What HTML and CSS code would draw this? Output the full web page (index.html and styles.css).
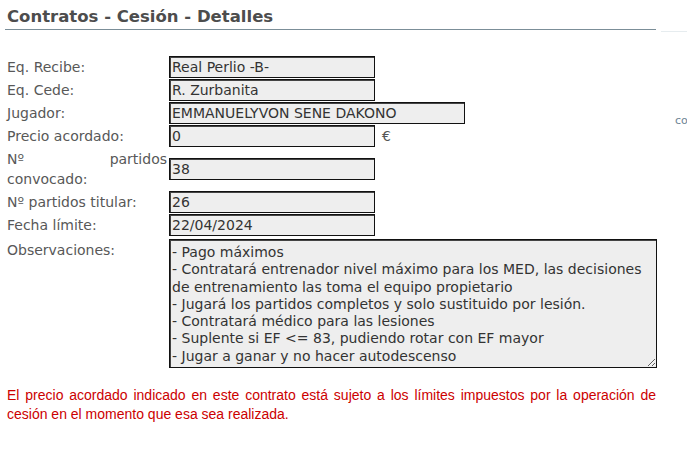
FILE: index.html
```html
<!DOCTYPE html>
<html lang="es">
<head>
  <meta charset="UTF-8">
  <title>Contratos - Cesión - Detalles</title>
  <link rel="stylesheet" href="styles.css">
</head>
<body>
  <div class="page">
    <div class="main">
      <h1 class="title">Contratos - Cesión - Detalles</h1>

      <form class="details">
        <label class="lbl">Eq. Recibe:</label>
        <div class="field"><input class="box" type="text" value="Real Perlio -B-" readonly></div>

        <label class="lbl">Eq. Cede:</label>
        <div class="field"><input class="box" type="text" value="R. Zurbanita" readonly></div>

        <label class="lbl">Jugador:</label>
        <div class="field"><input class="box wide" type="text" value="EMMANUELYVON SENE DAKONO" readonly></div>

        <label class="lbl">Precio acordado:</label>
        <div class="field"><input class="box" type="text" value="0" readonly><span class="money">€</span></div>

        <label class="lbl">Nº partidos convocado:</label>
        <div class="field"><input class="box" type="text" value="38" readonly></div>

        <label class="lbl">Nº partidos titular:</label>
        <div class="field"><input class="box" type="text" value="26" readonly></div>

        <label class="lbl">Fecha límite:</label>
        <div class="field"><input class="box" type="text" value="22/04/2024" readonly></div>

        <label class="lbl top">Observaciones:</label>
        <div class="field"><textarea class="notes" readonly>- Pago máximos
- Contratará entrenador nivel máximo para los MED, las decisiones de entrenamiento las toma el equipo propietario
- Jugará los partidos completos y solo sustituido por lesión.
- Contratará médico para las lesiones
- Suplente si EF &lt;= 83, pudiendo rotar con EF mayor
- Jugar a ganar y no hacer autodescenso</textarea></div>
      </form>

      <p class="warning">El precio acordado indicado en este contrato está sujeto a los límites impuestos por la operación de cesión en el momento que esa sea realizada.</p>
    </div>

    <div class="side">
      <a class="side-link" href="#">contratos</a>
    </div>
  </div>
</body>
</html>
```

FILE: styles.css
```css
html, body {
  margin: 0;
  padding: 0;
  background-color: #fff;
  font-family: "DejaVu Sans", Verdana, sans-serif;
}

.page {
  display: flex;
  width: 687px;
  overflow: hidden;
}

.main {
  width: 651px;
  padding-left: 5px;
  flex-shrink: 0;
}

.title {
  margin: 0;
  padding: 7px 2px 2px;
  font-size: 16.5px;
  line-height: 20px;
  font-weight: bold;
  color: #4d4d4d;
  border-bottom: 1px solid #7b8e98;
}

/* форма: две колонки, подписи и поля */
.details {
  display: grid;
  grid-template-columns: 160px 1fr;
  column-gap: 2px;
  row-gap: 1px;
  align-items: center;
  margin: 26px 0 0 2px;
}

.lbl {
  font-size: 14px;
  line-height: 20px;
  color: #585858;
  text-align: justify;
  padding: 1px 0;
}

.lbl.top {
  align-self: start;
  padding-top: 3px;
}

.field {
  display: flex;
  align-items: center;
  gap: 7px;
}

.box {
  box-sizing: border-box;
  width: 206px;
  height: 22px;
  margin: 0;
  padding: 0 2px;
  font-family: "DejaVu Sans", Verdana, sans-serif;
  font-size: 14px;
  color: #333;
  background-color: #eee;
  border: 1px solid #111;
  box-shadow: inset 1px 1px 0 #444;
  outline: none;
}

.box.wide {
  width: 296px;
}

.money {
  font-size: 14px;
  color: #555;
}

.notes {
  box-sizing: border-box;
  width: 488px;
  height: 129px;
  margin: 2px 0 0;
  padding: 4px 2px 2px;
  font-family: "DejaVu Sans", Verdana, sans-serif;
  font-size: 14px;
  line-height: 17.3px;
  color: #333;
  background-color: #eee;
  border: 1px solid #111;
  box-shadow: inset 1px 1px 0 #444;
  outline: none;
  overflow: hidden;
}

.warning {
  margin: 18px 0 0 2px;
  font-family: "Liberation Sans", Arial, sans-serif;
  font-size: 14px;
  line-height: 19px;
  color: #cc0000;
  text-align: justify;
}

.side {
  flex: 1;
  min-width: 0;
  margin-left: 5px;
  margin-top: 31px;
  border-top: 1px solid #e6ecef;
  padding: 77px 0 0 14px;
  white-space: nowrap;
}

.side-link {
  font-size: 11px;
  color: #6d8494;
  text-decoration: none;
}
```
